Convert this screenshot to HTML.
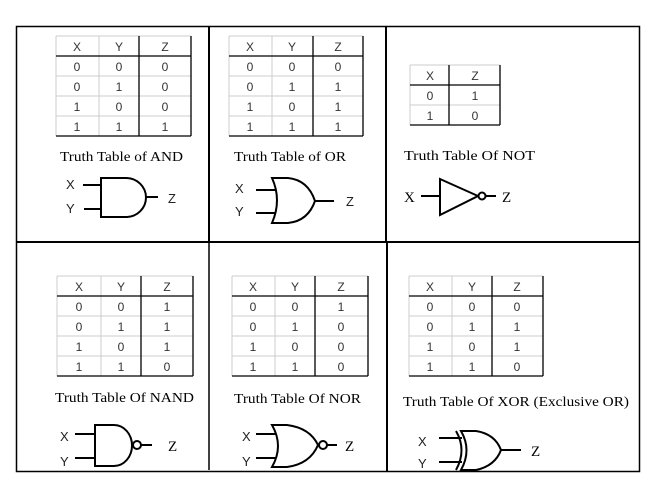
<!DOCTYPE html>
<html><head><meta charset="utf-8"><style>
html,body{margin:0;padding:0;background:#fff;width:666px;height:501px;overflow:hidden}
svg{display:block}
.t{font-family:"Liberation Sans",sans-serif;font-size:12px;fill:#333;text-anchor:middle}
.c{font-family:"Liberation Serif",serif;font-size:14px;fill:#000}
.g{stroke:#ccc;stroke-width:1;fill:none}
.b{stroke:#000;stroke-width:1.3;fill:none}
.w{stroke:#000;stroke-width:2;fill:none}
.l{font-family:"Liberation Sans",sans-serif;font-size:13px;fill:#222}
.s{font-family:"Liberation Serif",serif;font-size:15px;fill:#000}
</style></head><body>
<svg width="666" height="501" viewBox="0 0 666 501">
<rect x="16.5" y="26.5" width="623" height="445" fill="none" stroke="#000" stroke-width="1.5"/>
<line x1="16" y1="242" x2="640" y2="242" stroke="#000" stroke-width="2"/>
<line x1="209" y1="26" x2="209" y2="242" stroke="#000" stroke-width="2"/>
<line x1="386" y1="26" x2="386" y2="242" stroke="#000" stroke-width="2"/>
<line x1="209" y1="242" x2="209" y2="470" stroke="#000" stroke-width="1.5"/>
<line x1="387" y1="242" x2="387" y2="472" stroke="#000" stroke-width="2"/>

<g>
<path class="g" d="M56 36H191M56 36V136M99 36V136M56 76H191M56 96H191M56 116H191"/>
<path class="b" d="M56 56H191M139 36V136M191 36V136M56 136H191"/>
<text class="t" x="77" y="51">X</text><text class="t" x="119" y="51">Y</text><text class="t" x="165" y="51">Z</text>
<text class="t" x="77" y="71">0</text><text class="t" x="119" y="71">0</text><text class="t" x="165" y="71">0</text>
<text class="t" x="77" y="91">0</text><text class="t" x="119" y="91">1</text><text class="t" x="165" y="91">0</text>
<text class="t" x="77" y="111">1</text><text class="t" x="119" y="111">0</text><text class="t" x="165" y="111">0</text>
<text class="t" x="77" y="131">1</text><text class="t" x="119" y="131">1</text><text class="t" x="165" y="131">1</text>
</g>
<g>
<path class="g" d="M229 36H363M229 36V136M272 36V136M229 76H363M229 96H363M229 116H363"/>
<path class="b" d="M229 56H363M313 36V136M363 36V136M229 136H363"/>
<text class="t" x="250" y="51">X</text><text class="t" x="292" y="51">Y</text><text class="t" x="338" y="51">Z</text>
<text class="t" x="250" y="71">0</text><text class="t" x="292" y="71">0</text><text class="t" x="338" y="71">0</text>
<text class="t" x="250" y="91">0</text><text class="t" x="292" y="91">1</text><text class="t" x="338" y="91">1</text>
<text class="t" x="250" y="111">1</text><text class="t" x="292" y="111">0</text><text class="t" x="338" y="111">1</text>
<text class="t" x="250" y="131">1</text><text class="t" x="292" y="131">1</text><text class="t" x="338" y="131">1</text>
</g>
<g>
<path class="g" d="M410 65H500M410 65V125M410 105H500"/>
<path class="b" d="M410 85H500M449 65V125M500 65V125M410 125H500"/>
<text class="t" x="430" y="80">X</text><text class="t" x="475" y="80">Z</text>
<text class="t" x="430" y="100">0</text><text class="t" x="475" y="100">1</text>
<text class="t" x="430" y="120">1</text><text class="t" x="475" y="120">0</text>
</g>
<g>
<path class="g" d="M57 276H193M57 276V376M101 276V376M57 316H193M57 336H193M57 356H193"/>
<path class="b" d="M57 296H193M141 276V376M193 276V376M57 376H193"/>
<text class="t" x="79" y="291">X</text><text class="t" x="121" y="291">Y</text><text class="t" x="167" y="291">Z</text>
<text class="t" x="79" y="311">0</text><text class="t" x="121" y="311">0</text><text class="t" x="167" y="311">1</text>
<text class="t" x="79" y="331">0</text><text class="t" x="121" y="331">1</text><text class="t" x="167" y="331">1</text>
<text class="t" x="79" y="351">1</text><text class="t" x="121" y="351">0</text><text class="t" x="167" y="351">1</text>
<text class="t" x="79" y="371">1</text><text class="t" x="121" y="371">1</text><text class="t" x="167" y="371">0</text>
</g>
<g>
<path class="g" d="M232 276H368M232 276V376M275 276V376M232 316H368M232 336H368M232 356H368"/>
<path class="b" d="M232 296H368M315 276V376M368 276V376M232 376H368"/>
<text class="t" x="253" y="291">X</text><text class="t" x="295" y="291">Y</text><text class="t" x="341" y="291">Z</text>
<text class="t" x="253" y="311">0</text><text class="t" x="295" y="311">0</text><text class="t" x="341" y="311">1</text>
<text class="t" x="253" y="331">0</text><text class="t" x="295" y="331">1</text><text class="t" x="341" y="331">0</text>
<text class="t" x="253" y="351">1</text><text class="t" x="295" y="351">0</text><text class="t" x="341" y="351">0</text>
<text class="t" x="253" y="371">1</text><text class="t" x="295" y="371">1</text><text class="t" x="341" y="371">0</text>
</g>
<g>
<path class="g" d="M409 276H543M409 276V376M452 276V376M409 316H543M409 336H543M409 356H543"/>
<path class="b" d="M409 296H543M492 276V376M543 276V376M409 376H543"/>
<text class="t" x="430" y="291">X</text><text class="t" x="472" y="291">Y</text><text class="t" x="517" y="291">Z</text>
<text class="t" x="430" y="311">0</text><text class="t" x="472" y="311">0</text><text class="t" x="517" y="311">0</text>
<text class="t" x="430" y="331">0</text><text class="t" x="472" y="331">1</text><text class="t" x="517" y="331">1</text>
<text class="t" x="430" y="351">1</text><text class="t" x="472" y="351">0</text><text class="t" x="517" y="351">1</text>
<text class="t" x="430" y="371">1</text><text class="t" x="472" y="371">1</text><text class="t" x="517" y="371">0</text>
</g>

<text class="c" x="60" y="161" textLength="123" lengthAdjust="spacingAndGlyphs">Truth Table of AND</text>
<text class="c" x="234" y="161" textLength="112" lengthAdjust="spacingAndGlyphs">Truth Table of OR</text>
<text class="c" x="404" y="160" textLength="131" lengthAdjust="spacingAndGlyphs">Truth Table Of  NOT</text>
<text class="c" x="55" y="402" textLength="139" lengthAdjust="spacingAndGlyphs">Truth Table Of NAND</text>
<text class="c" x="234" y="403" textLength="127" lengthAdjust="spacingAndGlyphs">Truth Table Of NOR</text>
<text class="c" x="403" y="406" textLength="226" lengthAdjust="spacingAndGlyphs">Truth Table Of  XOR (Exclusive OR)</text>

<text class="l" x="66" y="189">X</text><text class="l" x="66" y="213">Y</text>
<path class="w" d="M83 185H101M84 209H101M101 178H126A20 19.5 0 0 1 126 217H101Z"/>
<path class="w" d="M146 197H158"/>
<text class="l" x="168" y="203">Z</text>
<text class="l" x="235" y="193">X</text><text class="l" x="235" y="216">Y</text>
<path class="w" d="M256 190H276M256 213H276"/>
<path class="w" d="M272 178Q282 200 272 223H288Q308 221 315 201Q308 180 288 178Z"/>
<path class="w" d="M315 201H334"/>
<text class="l" x="346" y="206">Z</text>
<text class="s" x="404" y="202">X</text>
<path class="w" d="M421 196H440M440 179V215L478 196Z"/>
<circle cx="482" cy="196" r="3.5" fill="#fff" stroke="#000" stroke-width="2"/>
<path class="w" d="M486 196H496"/>
<text class="s" x="502" y="202">Z</text>
<text class="l" x="60" y="441">X</text><text class="l" x="60" y="466">Y</text>
<path class="w" d="M75 434H95M75 458H95M95 425H114A18 20.5 0 0 1 114 466H95Z"/>
<circle cx="137" cy="445" r="4" fill="#fff" stroke="#000" stroke-width="2"/>
<path class="w" d="M141 445H152"/>
<text class="s" x="168" y="451">Z</text>
<text class="l" x="242" y="441">X</text><text class="l" x="242" y="466">Y</text>
<path class="w" d="M256 434H276M256 458H276"/>
<path class="w" d="M272 425Q284 446 272 467H287Q310 464 318 445Q310 428 287 425Z"/>
<circle cx="323" cy="445" r="4" fill="#fff" stroke="#000" stroke-width="2"/>
<path class="w" d="M327 445H337"/>
<text class="s" x="345" y="451">Z</text>
<text class="l" x="418" y="446">X</text><text class="l" x="418" y="468">Y</text>
<path class="w" d="M439 438H462M439 462H462"/>
<path class="w" d="M456 431Q467 450 456 470"/>
<path class="w" d="M461 431Q472 450 461 470H476Q495 466 501 450Q495 434 476 431Z"/>
<path class="w" d="M501 450H521"/>
<text class="s" x="531" y="456">Z</text>
</svg>
</body></html>
